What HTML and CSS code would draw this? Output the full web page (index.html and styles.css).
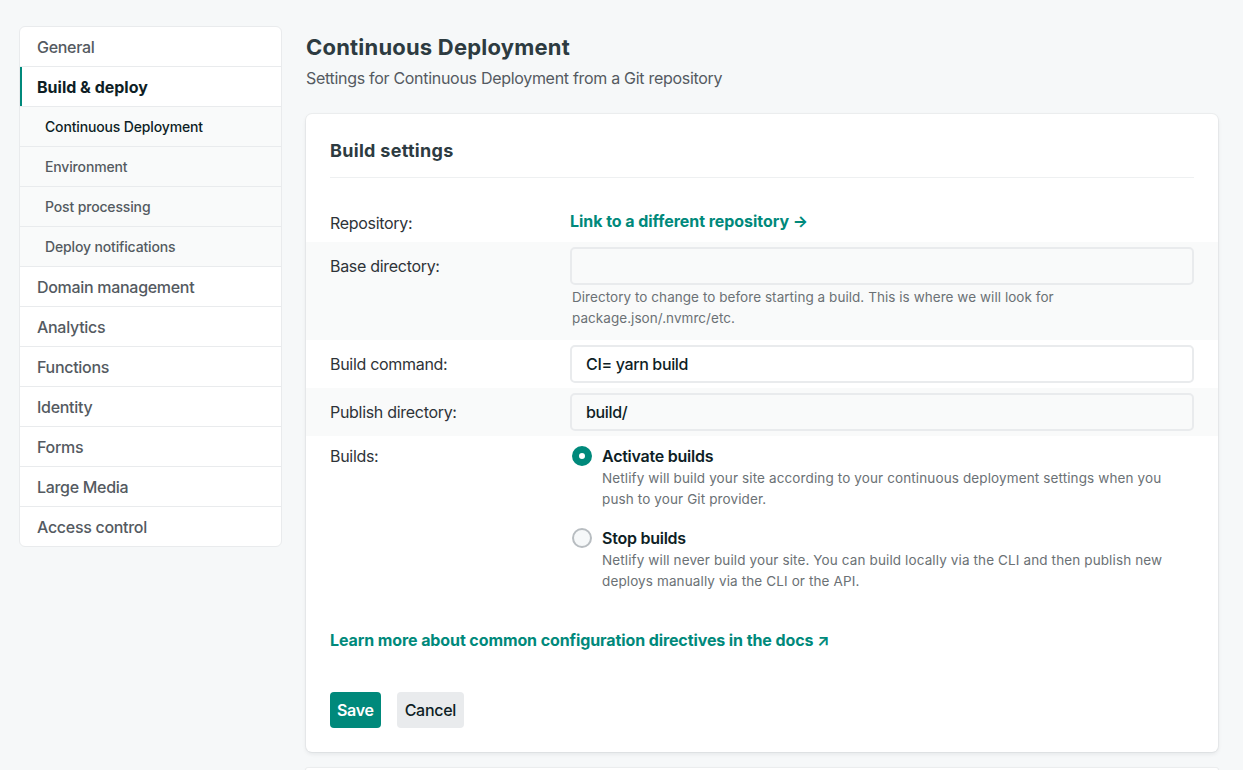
FILE: index.html
```html
<!DOCTYPE html>
<html lang="en">
<head>
<meta charset="utf-8">
<title>Continuous Deployment</title>
<link rel="stylesheet" href="styles.css">
</head>
<body>
<div class="page">
  <nav class="sidenav">
    <a class="nav-item">General</a>
    <a class="nav-item active">Build &amp; deploy</a>
    <a class="nav-sub current">Continuous Deployment</a>
    <a class="nav-sub">Environment</a>
    <a class="nav-sub">Post processing</a>
    <a class="nav-sub">Deploy notifications</a>
    <a class="nav-item">Domain management</a>
    <a class="nav-item">Analytics</a>
    <a class="nav-item">Functions</a>
    <a class="nav-item">Identity</a>
    <a class="nav-item">Forms</a>
    <a class="nav-item">Large Media</a>
    <a class="nav-item last">Access control</a>
  </nav>
  <main class="main">
    <header class="page-head">
      <h1 class="page-title">Continuous Deployment</h1>
      <p class="page-sub">Settings for Continuous Deployment from a Git repository</p>
    </header>
    <section class="card">
      <h2 class="card-title">Build settings</h2>
      <div class="form">
        <div class="row row-repo">
          <div class="label">Repository:</div>
          <div class="field"><a class="link">Link to a different repository →</a></div>
        </div>
        <div class="row row-gray row-base">
          <div class="label label-input">Base directory:</div>
          <div class="field">
            <div class="input"></div>
            <p class="help">Directory to change to before starting a build. This is where we will look for package.json/.nvmrc/etc.</p>
          </div>
        </div>
        <div class="row row-input">
          <div class="label label-input">Build command:</div>
          <div class="field"><div class="input">CI= yarn build</div></div>
        </div>
        <div class="row row-gray row-input">
          <div class="label label-input">Publish directory:</div>
          <div class="field"><div class="input">build/</div></div>
        </div>
        <div class="row row-builds">
          <div class="label label-radio">Builds:</div>
          <div class="field options">
            <div class="option">
              <span class="radio checked"></span>
              <div class="option-body">
                <div class="option-title">Activate builds</div>
                <p class="option-desc">Netlify will build your site according to your continuous deployment settings when you push to your Git provider.</p>
              </div>
            </div>
            <div class="option">
              <span class="radio"></span>
              <div class="option-body">
                <div class="option-title">Stop builds</div>
                <p class="option-desc">Netlify will never build your site. You can build locally via the CLI and then publish new deploys manually via the CLI or the API.</p>
              </div>
            </div>
          </div>
        </div>
      </div>
      <p class="docs"><a class="link">Learn more about common configuration directives in the docs ↗</a></p>
      <div class="actions">
        <button class="btn btn-primary">Save</button>
        <button class="btn btn-secondary">Cancel</button>
      </div>
    </section>
    <section class="card card-next"></section>
  </main>
</div>
</body>
</html>
```
FILE: styles.css
```css
* { box-sizing: border-box; }
html, body { margin: 0; padding: 0; }
body {
  background: #f6f8f9;
  font-family: Inter, "Liberation Sans", sans-serif;
  color: #2e3338;
  font-size: 16px;
  overflow: hidden;
  height: 770px;
}
.page {
  display: flex;
  align-items: flex-start;
  gap: 24px;
  padding: 26px 25px 0 19px;
}
.sidenav {
  width: 263px;
  flex: none;
  display: flex;
  flex-direction: column;
  background: #fff;
  border: 1px solid #e9ebed;
  border-radius: 6px;
  overflow: hidden;
}
.nav-item, .nav-sub {
  display: flex;
  align-items: center;
  height: 40px;
  border-bottom: 1px solid #e9ebed;
  color: #545a61;
  text-decoration: none;
}
.nav-item { padding-left: 17px; font-size: 16px; font-weight: 500; letter-spacing: -0.3px; }
.nav-item.last { border-bottom: none; height: 39px; }
.nav-item.active {
  color: #0e1e25;
  font-weight: 700;
  letter-spacing: 0;
  box-shadow: inset 2px 0 0 #00897b;
}
.nav-sub {
  padding-left: 25px;
  font-size: 14px;
  font-weight: 500;
  letter-spacing: -0.15px;
  background: #f9fafa;
  color: #545a61;
}
.nav-sub.current { color: #0e1e25; }
.main { flex: 1; min-width: 0; }
.page-head { padding-top: 6px; }
.page-title {
  margin: 0;
  font-size: 22px;
  line-height: 30px;
  font-weight: 700;
  letter-spacing: 0.2px;
  color: #2d3b41;
}
.page-sub {
  margin: 0;
  font-size: 16px;
  line-height: 30px;
  letter-spacing: -0.3px;
  color: #545a61;
  padding-top: 1px;
}
.card {
  margin-top: 21px;
  background: #fff;
  border-radius: 6px;
  box-shadow: 0 0 0 1px rgba(14,30,37,.04), 0 2px 4px rgba(14,30,37,.08);
  padding: 25px 24px 24px;
}
.card-title {
  margin: 0;
  font-size: 18px;
  line-height: 24px;
  font-weight: 700;
  letter-spacing: 0.3px;
  color: #2d3b41;
  padding-bottom: 14px;
  border-bottom: 1px solid #eef0f1;
}
.form { margin: 22px -24px 0; }
.row {
  display: flex;
  padding: 0 24px;
}
.row-gray { background: #f9fafa; }
.label {
  width: 240px;
  flex: none;
  color: #2e3338;
  font-size: 16px;
  line-height: 24px;
  letter-spacing: -0.3px;
}
.field { flex: 1; min-width: 0; }
.row-repo { padding-top: 11px; padding-bottom: 7px; }
.link {
  color: #00897b;
  font-weight: 700;
  letter-spacing: -0.05px;
  text-decoration: none;
}
.label-input { padding-top: 7px; }
.row-base { padding-top: 5px; padding-bottom: 11px; }
.row-input { padding-top: 5px; padding-bottom: 5px; }
.input {
  height: 38px;
  border: 2px solid #e9ebed;
  border-radius: 5px;
  padding: 0 14px;
  display: flex;
  align-items: center;
  font-size: 16px;
  font-weight: 500;
  letter-spacing: -0.35px;
  color: #0e1e25;
}
.help {
  margin: 2px 0 0;
  padding-left: 2px;
  font-size: 13.5px;
  line-height: 21px;
  letter-spacing: 0.05px;
  color: #6b7175;
}
.row-builds { padding-top: 8px; }
.options { display: flex; flex-direction: column; gap: 16px; }
.option { display: flex; gap: 10px; padding-left: 2px; padding-right: 16px; }
.radio {
  flex: none;
  width: 20px;
  height: 20px;
  margin-top: 2px;
  border-radius: 50%;
  border: 2px solid #b8bdc1;
  background: #f6f8f9;
}
.radio.checked {
  border: 7px solid #00897b;
  background: #fff;
}
.option-title {
  font-size: 16px;
  line-height: 24px;
  font-weight: 600;
  letter-spacing: -0.25px;
  color: #0e1e25;
}
.option-desc {
  margin: 0;
  font-size: 13.5px;
  line-height: 21px;
  letter-spacing: 0.12px;
  color: #6b7175;
}
.docs { margin: 36px 0 0; line-height: 24px; font-size: 16px; }
.docs .link { letter-spacing: -0.1px; }
.actions { display: flex; gap: 16px; margin-top: 40px; }
.btn {
  height: 36px;
  border: none;
  border-radius: 4px;
  font-family: inherit;
  font-size: 16px;
  letter-spacing: -0.3px;
  padding: 0 7px;
  cursor: pointer;
}
.btn-primary { background: #00897b; color: #fff; font-weight: 600; }
.btn-secondary { background: #e9ebed; color: #0e1e25; font-weight: 500; padding: 0 8px; }
.card-next { margin-top: 16px; height: 4px; padding: 0; }
```
